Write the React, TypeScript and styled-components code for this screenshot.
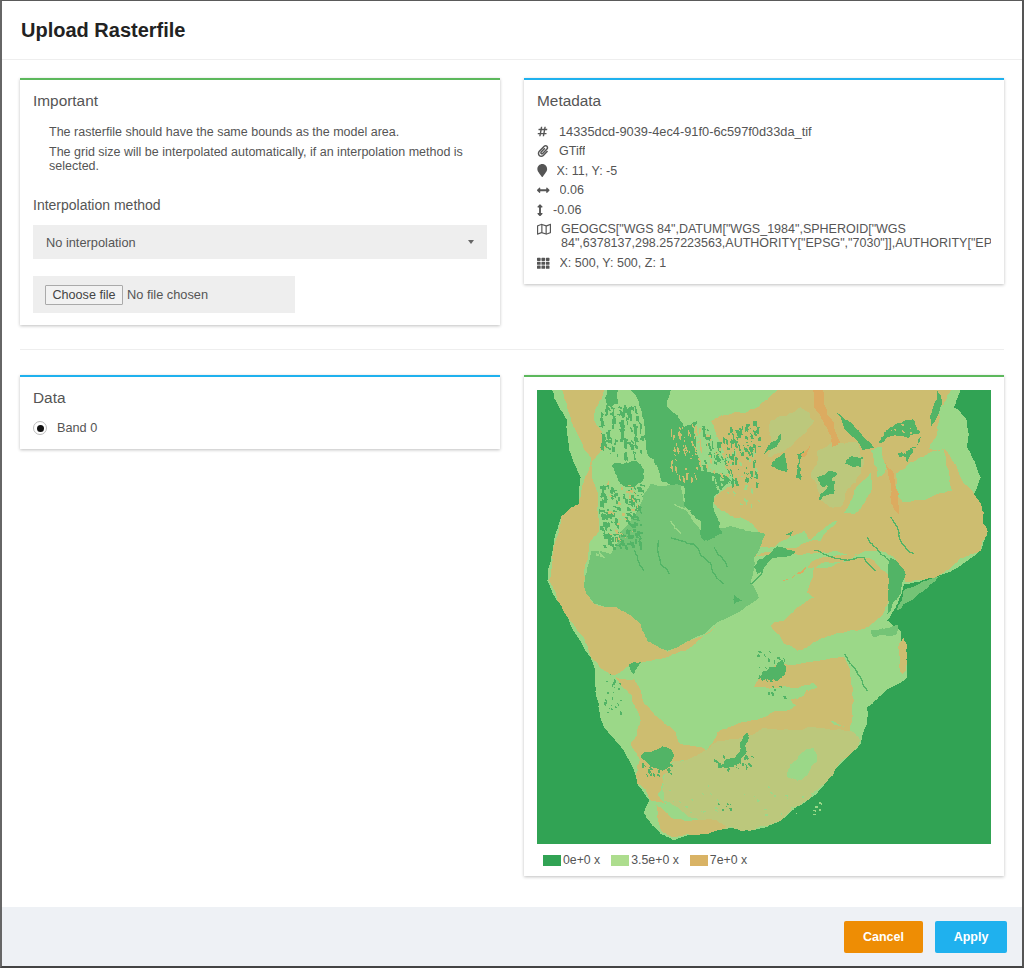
import React from "react";
import styled, { createGlobalStyle } from "styled-components";
import { FaHashtag, FaPaperclip, FaMapMarker, FaArrowsAltH, FaArrowsAltV, FaRegMap, FaTh } from "react-icons/fa";

const Global = createGlobalStyle`
  html, body { margin: 0; padding: 0; background: #fff; }
  body { font-family: "Liberation Sans", Arial, sans-serif; color: #555; }
  * { box-sizing: border-box; }
`;

const Modal = styled.div`
  width: 1024px;
  height: 968px;
  display: flex;
  flex-direction: column;
  background: #fff;
  border-top: 1px solid #5a5a5a;
  border-left: 2px solid #666;
  border-right: 2px solid #555;
  border-bottom: 2px solid #444;
`;
const Header = styled.header`
  height: 59px;
  flex: none;
  display: flex;
  align-items: center;
  padding-left: 19px;
  border-bottom: 1px solid #eee;
`;
const Title = styled.h1`
  margin: 0;
  font-size: 20px;
  font-weight: 700;
  color: #222;
`;
const Content = styled.main`
  flex: 1;
  padding: 18px 18px 0;
`;
const Row = styled.div`
  display: grid;
  grid-template-columns: 480px 480px;
  gap: 24px;
  align-items: start;
`;
const Divider = styled.hr`
  margin: 24px 0 25px;
  border: 0;
  border-top: 1px solid #eee;
`;
const Card = styled.section<{ $accent: string }>`
  background: #fff;
  border-top: 2px solid ${(p) => p.$accent};
  box-shadow: 0 1px 3px rgba(0, 0, 0, 0.25);
  padding: 13px 13px 12px;
`;
const MetaCard = styled(Card)`
  padding-bottom: 11px;
`;
const CardTitle = styled.h2`
  margin: 0;
  font-size: 15.4px;
  line-height: 16px;
  font-weight: 400;
  color: #555;
`;
const Notes = styled.div`
  margin: 16px 0 0;
  padding-left: 16px;
  font-size: 12.5px;
  line-height: 14px;
  color: #555;
`;
const Note = styled.p`
  margin: 0 0 6px;
`;
const FieldLabel = styled.div`
  margin-top: 24px;
  font-size: 14px;
  line-height: 16px;
  color: #555;
`;
const SelectBox = styled.div`
  margin-top: 12px;
  height: 34px;
  background: #eee;
  display: flex;
  align-items: center;
  justify-content: space-between;
  padding: 0 13px;
  font-size: 12.8px;
  color: #555;
`;
const Caret = styled.span`
  width: 0;
  height: 0;
  border-left: 3.5px solid transparent;
  border-right: 3.5px solid transparent;
  border-top: 4px solid #666;
`;
const FileBox = styled.div`
  margin-top: 17px;
  width: 262px;
  height: 37px;
  background: #eee;
  display: flex;
  align-items: center;
  padding-left: 12px;
  font-size: 12.8px;
  color: #555;
  gap: 4px;
`;
const FileButton = styled.button`
  width: 78px;
  height: 20px;
  padding: 0;
  background: #f2f2f2;
  border: 1px solid #aaa;
  border-radius: 1px;
  font: 12.6px "Liberation Sans", Arial, sans-serif;
  color: #444;
`;
const MetaList = styled.ul`
  list-style: none;
  margin: 12.5px 0 0;
  padding: 0;
`;
const MetaRow = styled.li<{ $gap: number }>`
  display: flex;
  align-items: flex-start;
  gap: ${(p) => p.$gap}px;
  padding: 3px 0 2.6px;
  font-size: 12.5px;
  line-height: 14px;
  color: #555;
`;
const IconSlot = styled.span<{ $w: number; $h: number }>`
  flex: none;
  display: block;
  width: ${(p) => p.$w}px;
  height: ${(p) => p.$h}px;
  margin-top: ${(p) => (14 - p.$h) / 2}px;
  color: #555;
  & > svg { display: block; width: 100%; height: 100%; }
`;
const MetaText = styled.span`
  white-space: nowrap;
  overflow: hidden;
  max-width: 430px;
  display: block;
`;
const MetaId = styled(MetaText)`
  font-size: 12.8px;
`;
const DataCard = styled(Card)`
  padding-bottom: 14px;
`;
const RadioRow = styled.label`
  display: flex;
  align-items: center;
  gap: 10px;
  margin-top: 15px;
  font-size: 12.7px;
  line-height: 14px;
  color: #555;
`;
const Radio = styled.span`
  width: 14px;
  height: 14px;
  border-radius: 50%;
  border: 1px solid #bbb;
  display: flex;
  align-items: center;
  justify-content: center;
  &::after {
    content: "";
    width: 7px;
    height: 7px;
    border-radius: 50%;
    background: #111;
  }
`;
const MapCard = styled(Card)`
  padding: 13px 13px 9px;
`;
const MapSvg = styled.svg`
  display: block;
  width: 454px;
  height: 454px;
`;
const Legend = styled.div`
  display: flex;
  gap: 11px;
  margin: 9px 0 0 6px;
  font-size: 12.3px;
  line-height: 14px;
  color: #555;
`;
const LegendItem = styled.span`
  display: flex;
  align-items: center;
  gap: 2px;
`;
const Swatch = styled.i<{ $c: string }>`
  display: block;
  width: 18px;
  height: 11px;
  background: ${(p) => p.$c};
`;
const Footer = styled.footer`
  height: 59px;
  flex: none;
  background: #eef1f5;
  display: flex;
  align-items: center;
  justify-content: flex-end;
  gap: 12px;
  padding-right: 15px;
`;
const Action = styled.button<{ $c: string; $w: number }>`
  width: ${(p) => p.$w}px;
  height: 32px;
  border: 0;
  border-radius: 2px;
  background: ${(p) => p.$c};
  color: #fff;
  font: 700 12.5px "Liberation Sans", Arial, sans-serif;
`;

const DARK = "#31a354";
const MID = "#74c476";
const DG = "#52b466";
const LIGHT = "#9bd888";
const TAN = "#cdbd70";
const OLIVE = "#bcc87c";
const ORANGE = "#dcab60";

let seed = 4242;
const rnd = () => {
  seed = (seed * 16807) % 2147483647;
  return seed / 2147483647;
};
type P = [number, number];
const parse = (s: string): P[] =>
  s.trim().split(/\s+/).map((q) => q.split(",").map(Number) as P);
const fractal = (a: P, b: P, amp: number, depth: number, out: P[]) => {
  if (depth === 0) {
    out.push(a);
    return;
  }
  const len = Math.hypot(b[0] - a[0], b[1] - a[1]);
  if (len < 6) {
    out.push(a);
    return;
  }
  const d = (rnd() - 0.5) * len * amp;
  const nx = -(b[1] - a[1]) / len;
  const ny = (b[0] - a[0]) / len;
  const m: P = [(a[0] + b[0]) / 2 + nx * d, (a[1] + b[1]) / 2 + ny * d];
  fractal(a, m, amp, depth - 1, out);
  fractal(m, b, amp, depth - 1, out);
};
const rough = (s: string, amp = 0.45, closed = true) => {
  const pts = parse(s);
  const out: P[] = [];
  const n = pts.length;
  for (let i = 0; i < (closed ? n : n - 1); i++) {
    fractal(pts[i], pts[(i + 1) % n], amp, 4, out);
  }
  if (!closed) out.push(pts[n - 1]);
  return out.map((p) => `${p[0].toFixed(1)},${p[1].toFixed(1)}`).join(" ");
};

const raw: [string, string, number?][] = [
  [LIGHT, "85,-300 85,58 100,100 130,150 135,240 170,320 165,400 110,440 90,520 70,630 100,690 135,750 200,860 215,970 240,1070 300,1140 340,1240 375,1290 360,1325 410,1390 450,1410 560,1375 680,1380 770,1350 850,1290 950,1180 1010,1120 1030,1010 1150,920 1130,780 1090,750 1140,640 1260,610 1370,540 1390,490 1350,370 1370,320 1330,230 1330,150 1290,110 1310,58 1310,-300", 0.12],
  // west band
  [TAN, "115,20 240,20 240,60 210,150 250,230 205,270 215,350 225,480 195,520 180,600 180,650 210,700 280,710 350,700 380,712 345,740 360,790 430,845 560,785 575,765 500,830 430,860 330,880 270,915 200,860 140,750 100,690 75,630 85,560 95,510 110,440 165,400 195,300 200,260 150,170 130,110 115,60", 0.18],
  // SW strip and Karoo
  [TAN, "270,915 330,925 360,1000 390,1030 455,1085 470,1120 550,1140 580,1085 640,1060 720,1040 830,1000 975,1070 1005,1115 940,1190 700,1170 560,1195 450,1170 400,1225 345,1160 320,1120 350,1050", 0.22],
  // north + middle: tan mass
  [TAN, "560,150 620,130 700,110 760,60 760,-80 1280,-80 1280,60 1240,170 1215,240 1100,255 1260,235 1350,370 1390,490 1370,540 1260,605 1145,635 1110,560 1060,540 900,545 690,560 720,490 650,440 590,420 565,385 640,330 600,260", 0.25],
  [OLIVE, "880,240 1000,215 1020,270 1010,310 950,410 890,390 860,320", 0.3],
  [OLIVE, "740,150 830,110 870,150 800,230 730,260", 0.3],
  // centre south tan
  [TAN, "860,575 950,555 1050,570 1130,630 1090,700 1070,740 1000,780 880,810 820,840 780,820 740,765 760,750 870,680 830,640", 0.2],
  [TAN, "860,875 960,860 990,990 975,1080 830,1020 800,985 870,940 690,950 760,880", 0.22],
  // south olive
  [OLIVE, "450,1170 720,1070 980,1080 1010,1110 940,1180 850,1290 770,1350 680,1380 560,1372 500,1340 420,1290 420,1220", 0.2],
  [TAN, "345,1170 450,1180 400,1270 430,1300 380,1290 340,1240", 0.3],
  [TAN, "395,1300 440,1340 560,1345 610,1365 450,1400 410,1380", 0.25],
  [LIGHT, "800,1180 870,1130 880,1170 820,1230 790,1220", 0.3],
  [LIGHT, "800,980 870,935 880,950 820,985", 0.3],
  [LIGHT, "960,425 1040,305 1045,340 990,430", 0.2],
  [LIGHT, "860,510 940,450 890,510", 0.2],
  [LIGHT, "1115,310 1210,250 1260,235 1285,360 1135,395", 0.25],
  [LIGHT, "1040,240 1075,230 1090,290 1060,320", 0.3],
  [LIGHT, "700,555 710,530 800,495 840,480 860,510", 0.25],
  [LIGHT, "850,600 1030,545 1060,560 900,575", 0.2],
  [LIGHT, "970,850 1050,800 1130,800 1130,900 1040,990 1010,960", 0.2],
  [TAN, "1125,820 1138,800 1146,900 1134,912", 0.3],
  // Kalahari
  [MID, "380,340 470,340 480,400 530,480 620,465 725,490 690,560 680,630 705,680 590,750 540,790 430,840 370,810 350,760 280,710 210,700 180,650 190,590 200,540 260,550 340,420 360,370", 0.14],
  [LIGHT, "590,750 705,680 870,590 840,680 780,750 600,760", 0.15],
  [MID, "1040,780 1120,760 1120,790 1050,800", 0.2],
  [MID, "1140,660 1250,615 1140,700 1115,725", 0.2],
  // dark patches
  [DG, "320,20 440,20 440,60 430,110 480,170 520,150 530,300 620,330 570,380 570,420 595,490 540,510 530,450 480,400 480,345 410,330 370,250 360,150 320,60", 0.25],
  [DG, "250,40 290,40 280,100 245,110", 0.4],
  [DG, "260,285 330,270 360,320 310,350 280,320", 0.4],
  [DG, "880,395 910,340 935,330 930,370", 0.35],
  [DG, "740,285 780,245 790,305", 0.3],
  [DG, "820,250 845,240 832,330 815,320", 0.3],
  [DG, "880,320 940,310 900,350", 0.4],
  [DG, "720,250 770,190 745,235", 0.3],
  [DG, "1065,225 1110,195 1190,185 1165,145 1100,170", 0.4],
  [DG, "1120,250 1190,200 1150,275", 0.4],
  [DG, "690,590 760,525 815,545 760,560 700,610", 0.35],
  [DG, "935,120 1050,230 1015,238", 0.2],
  [DG, "1240,58 1255,100 1220,170", 0.25],
  [DG, "960,280 1020,255 1010,290", 0.4],
  [DG, "630,670 655,690 630,700", 0.2],
  [DG, "775,490 810,480 800,495", 0.4],
  [DG, "315,880 350,875 330,910", 0.3],
  [DG, "1100,560 1145,610 1100,720 1090,730", 0.2],
  [DG, "580,1190 640,1150 670,1085 665,1150 620,1190", 0.4],
  [DG, "350,1160 440,1135 420,1200 380,1190", 0.45],
  [DG, "720,900 780,860 760,930 710,930", 0.5],
  // orange rift
  [ORANGE, "860,40 890,40 900,100 950,215 925,228 870,110", 0.2],
  [ORANGE, "1080,270 1110,310 1125,430 1100,395", 0.2],
  [ORANGE, "830,250 860,220 840,260", 0.3],
  [ORANGE, "775,630 850,585 800,625", 0.3],
];
const polys = raw.map(([c, p, a]) => [c, rough(p, a)] as [string, string]);

const rawRivers: [string, string][] = [
  [DG, "440,500 510,520 600,640"],
  [DG, "405,510 410,580 435,610"],
  [DG, "330,540 360,600"],
  [DG, "570,530 610,590"],
  [DG, "1100,440 1130,510 1170,550"],
  [DG, "1030,500 1070,550 1140,620"],
  [DG, "960,850 1010,920 1030,960"],
  [DG, "870,540 1020,560 1055,600"],
  [DG, "720,590 680,640"],
  [LIGHT, "450,400 500,420"],
  [LIGHT, "440,450 470,490"],
];
const rivers = rawRivers.map(([c, p]) => [c, rough(p, 0.2, false)] as [string, string]);

const specks: { c: string; p: string }[] = [];
const zone = (x0: number, y0: number, x1: number, y1: number, n: number, c: string, mw = 8, mh = 28) => {
  for (let i = 0; i < n; i++) {
    const x = x0 + rnd() * (x1 - x0);
    const y = y0 + rnd() * (y1 - y0);
    const w = 3 + rnd() * mw;
    const h = 4 + rnd() * mh;
    const t = (rnd() - 0.3) * h * 0.5;
    specks.push({ c, p: `${x},${y} ${x + w},${y + rnd() * 4} ${x + w + t},${y + h} ${x + t},${y + h - rnd() * 4}` });
  }
};
zone(225, 100, 350, 250, 90, DG);
zone(225, 340, 350, 530, 170, DG, 10, 14);
zone(250, 330, 340, 510, 30, TAN, 8, 10);
zone(530, 160, 700, 340, 110, DG, 7, 30);
zone(540, 170, 690, 330, 50, TAN, 5, 16);
zone(440, 160, 530, 320, 60, TAN, 3, 20);
zone(560, 230, 700, 400, 40, LIGHT, 6, 14);
zone(1100, 160, 1185, 265, 40, TAN, 6, 8);
zone(660, 150, 710, 240, 15, DG, 8, 16);
zone(195, 520, 250, 560, 12, LIGHT, 6, 8);
zone(350, 1170, 440, 1210, 30, DG, 7, 12);
zone(570, 1150, 690, 1190, 25, DG, 7, 12);
zone(700, 840, 790, 980, 30, DG, 7, 9);
zone(570, 1290, 620, 1320, 6, DG, 6, 5);
zone(420, 1240, 900, 1330, 40, LIGHT, 7, 5);
zone(240, 900, 290, 1030, 24, DG, 4, 8);

const RasterMap = () => (
  <MapSvg viewBox="39 58 1362 1362" shapeRendering="crispEdges" role="img" aria-label="Raster map">
    <rect x="39" y="58" width="1362" height="1362" fill={DARK} />
    {polys.map(([c, p], i) => (
      <polygon key={i} fill={c} points={p} />
    ))}
    {specks.map((k, i) => (
      <polygon key={i} points={k.p} fill={k.c} />
    ))}
    {rivers.map(([c, p], i) => (
      <polyline key={i} fill="none" stroke={c} strokeWidth="4" points={p} />
    ))}
  </MapSvg>
);

export default function App() {
  return (
    <>
      <Global />
      <Modal>
        <Header>
          <Title>Upload Rasterfile</Title>
        </Header>
        <Content>
          <Row>
            <Card $accent="#5cb85c">
              <CardTitle>Important</CardTitle>
              <Notes>
                <Note>The rasterfile should have the same bounds as the model area.</Note>
                <Note>The grid size will be interpolated automatically, if an interpolation method is selected.</Note>
              </Notes>
              <FieldLabel>Interpolation method</FieldLabel>
              <SelectBox>
                No interpolation
                <Caret />
              </SelectBox>
              <FileBox>
                <FileButton type="button">Choose file</FileButton>
                No file chosen
              </FileBox>
            </Card>
            <MetaCard $accent="#1fb1ee">
              <CardTitle>Metadata</CardTitle>
              <MetaList>
                <MetaRow $gap={11}><IconSlot $w={11} $h={11}><FaHashtag /></IconSlot><MetaId>14335dcd-9039-4ec4-91f0-6c597f0d33da_tif</MetaId></MetaRow>
                <MetaRow $gap={10}><IconSlot $w={12} $h={12}><FaPaperclip /></IconSlot><MetaText>GTiff</MetaText></MetaRow>
                <MetaRow $gap={9}><IconSlot $w={10.5} $h={13}><FaMapMarker /></IconSlot><MetaText>X: 11, Y: -5</MetaText></MetaRow>
                <MetaRow $gap={10}><IconSlot $w={12.5} $h={12.5}><FaArrowsAltH /></IconSlot><MetaText>0.06</MetaText></MetaRow>
                <MetaRow $gap={10}><IconSlot $w={6} $h={12.5}><FaArrowsAltV /></IconSlot><MetaText>-0.06</MetaText></MetaRow>
                <MetaRow $gap={10}><IconSlot $w={14} $h={12.5}><FaRegMap /></IconSlot><MetaText>GEOGCS["WGS 84",DATUM["WGS_1984",SPHEROID["WGS<br />84",6378137,298.257223563,AUTHORITY["EPSG","7030"]],AUTHORITY["EP</MetaText></MetaRow>
                <MetaRow $gap={10}><IconSlot $w={12.5} $h={12.5}><FaTh /></IconSlot><MetaText>X: 500, Y: 500, Z: 1</MetaText></MetaRow>
              </MetaList>
            </MetaCard>
          </Row>
          <Divider />
          <Row>
            <DataCard $accent="#1fb1ee">
              <CardTitle>Data</CardTitle>
              <RadioRow>
                <Radio />
                Band 0
              </RadioRow>
            </DataCard>
            <MapCard $accent="#5cb85c">
              <RasterMap />
              <Legend>
                <LegendItem><Swatch $c="#31a354" />0e+0 x</LegendItem>
                <LegendItem><Swatch $c="#addd8e" />3.5e+0 x</LegendItem>
                <LegendItem><Swatch $c="#d9b365" />7e+0 x</LegendItem>
              </Legend>
            </MapCard>
          </Row>
        </Content>
        <Footer>
          <Action $c="#ee8d04" $w={79}>Cancel</Action>
          <Action $c="#1fb1ee" $w={72}>Apply</Action>
        </Footer>
      </Modal>
    </>
  );
}
